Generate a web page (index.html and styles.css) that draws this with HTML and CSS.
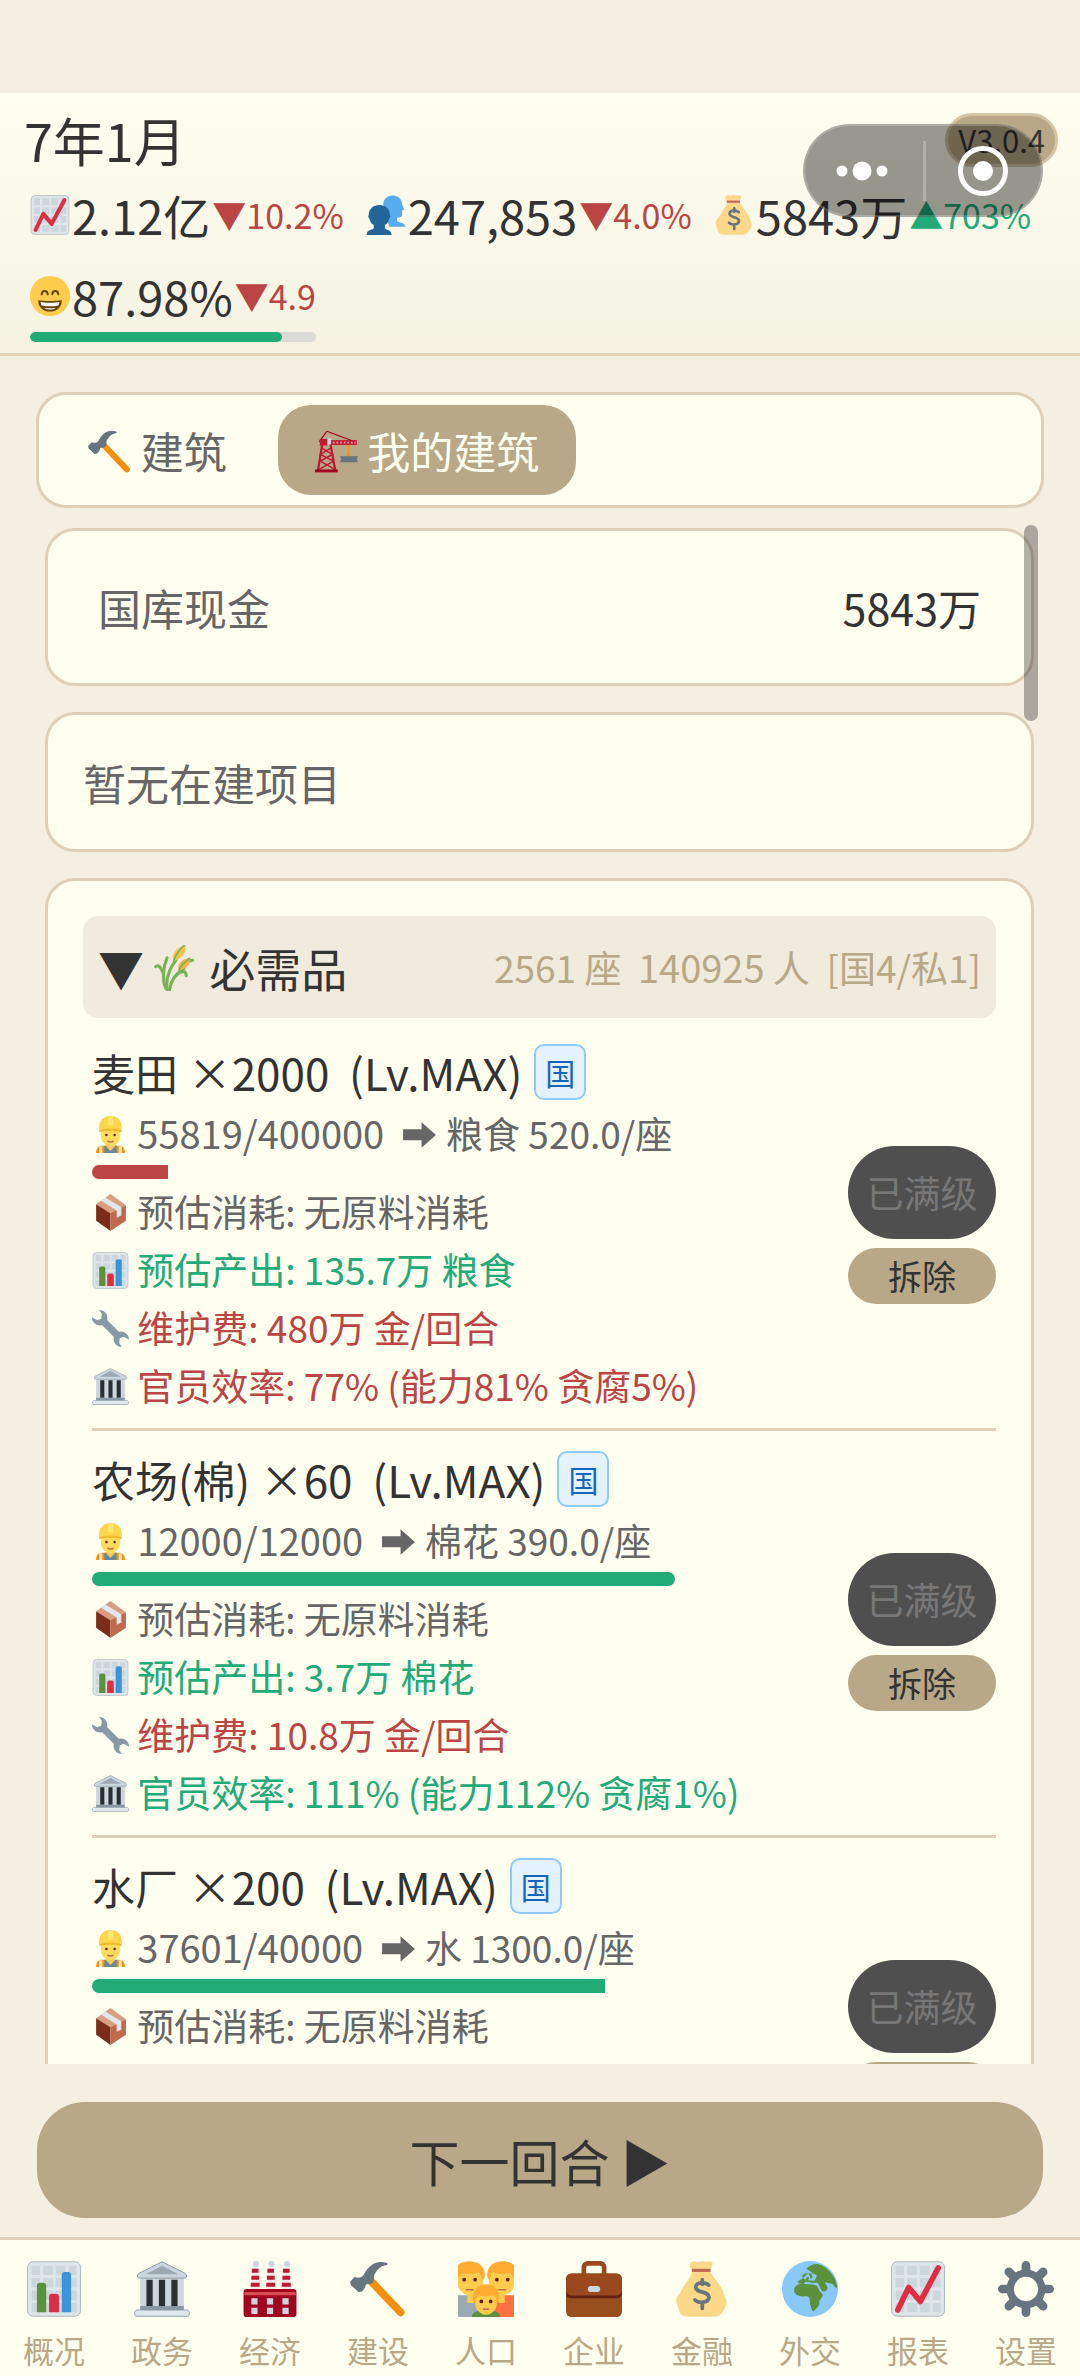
FILE: index.html
```html
<!DOCTYPE html>
<html lang="zh-CN">
<head>
    <meta charset="UTF-8">
    <meta name="viewport" content="width=device-width, initial-scale=1.0">
    <title>我的建筑</title>
    <link rel="stylesheet" href="styles.css">
</head>
<body>
    <!-- 图标 -->
    <svg class="sprite" aria-hidden="true">
        <symbol id="i-grid" viewBox="0 0 36 36">
            <rect x="1" y="0.5" width="34" height="35" rx="3.5" fill="#dfe6ea" stroke="#a9b3ba" stroke-width="0.6"/>
            <g fill="#ccd6dd">
                <path d="M3.5 3h5.500v6H3.500zM11 3h6.500v6H11zM19 3h6.500v6H19zM27.500 3H32.500v6H27.500z"/>
                <path d="M3.500 11h5.500v6H3.500zM11 11h6.500v6H11zM19 11h6.500v6H19zM27.500 11H32.500v6H27.500z"/>
                <path d="M3.500 19h5.500v6H3.500zM11 19h6.500v6H11zM19 19h6.500v6H19zM27.500 19H32.500v6H27.500z"/>
                <path d="M3.500 27h5.500v6H3.500zM11 27h6.500v6H11zM19 27h6.500v6H19zM27.500 27H32.500v6H27.500z"/>
            </g>
        </symbol>
        <symbol id="i-trend" viewBox="0 0 36 36">
            <use href="#i-grid"/>
            <path d="M5 31.500L12 17l7.500 9L31 4.500" fill="none" stroke="#dd2e44" stroke-width="3.600" stroke-linecap="round" stroke-linejoin="round"/>
        </symbol>
        <symbol id="i-bars" viewBox="0 0 36 36">
            <use href="#i-grid"/>
            <path d="M7 33V16a2 2 0 0 1 2-2h2a2 2 0 0 1 2 2v17z" fill="#5c913b"/>
            <path d="M14.800 33V23a2 2 0 0 1 2-2h2.400a2 2 0 0 1 2 2v10z" fill="#dd2e44"/>
            <path d="M23 33V9a2 2 0 0 1 2-2h2a2 2 0 0 1 2 2v24z" fill="#3b94d9"/>
        </symbol>
        <symbol id="i-users" viewBox="0 0 36 36">
            <path d="M15.500 9C15.500 4 19 0.500 24 0.500s8.500 3.500 8.500 8l2 4.500-2 1v4c0 2-2 2-4.500 2.500v2.500c0 2 7 1.500 7.500 5.500H21z" fill="#55acee"/>
            <path d="M2.500 18C2.500 12.500 6.500 9 12 9s9.500 3.500 9.500 9c.8.500.500 2.500-.5 3-.5 3-2 5-4 6v3c1 2 6 1 6 6H.500c0-5 5-4 6.500-6v-3c-2-1-3.500-3-4-6-1-.5-1.300-2.500-.5-3z" fill="#226699"/>
        </symbol>
        <symbol id="i-money" viewBox="0 0 36 36">
            <path d="M12 6C10 5 9.500 1.500 11.500.5c1.500-.7 3 .3 4 .2S17-.2 18.500.2s2 .6 3.500.2 3.500 0 2.500 2.600L22.500 6z" fill="#fdd888"/>
            <path d="M12 6.500h11C26 12 30 15 32 21c.8 2 2.500 5 1.500 7.500S31.500 33 29 35c-2 1-4 1-6 .8H11c-4 .4-7-.8-7.800-3.800C3 29.500 1 27.500 1.500 24.500 1.800 22 3.500 22 4.500 19.500 6.500 15 10 12 12 6.500z" fill="#fdd888"/>
            <path d="M11.500 5h12v2h-12z" fill="#bf6952"/>
            <path d="M22.300 15.500c-1.500-1.800-7.800-2.500-8.300 1-.4 4.500 8.800 2.500 8.500 7-.4 4-7.500 3.500-9 1.500M18.200 12v3M18.200 27v3.500" fill="none" stroke="#67757f" stroke-width="2.400" stroke-linecap="round"/>
        </symbol>
        <symbol id="i-grin" viewBox="0 0 36 36">
            <circle cx="18" cy="18" r="18" fill="#ffcc4d"/>
            <path d="M10.500 16.500c.5-4 5-4 5.500 0M20 16.500c.5-4 5-4 5.500 0" fill="none" stroke="#664500" stroke-width="1.800" stroke-linecap="round"/>
            <path d="M7.500 21.500c3 1.200 18 1.200 21 0 .5 6-4 10.500-10.500 10.500S7 27.500 7.500 21.500z" fill="#664500"/>
            <path d="M9.500 23.500c4 .8 13 .8 17 0-.2 1.500-.6 2.300-1 3-4 1-11 1-15 0-.5-.8-.8-1.500-1-3zM12.500 28.500c3 .7 8 .7 11 0-2.500 2.300-8.500 2.300-11 0z" fill="#fff"/>
        </symbol>
        <symbol id="i-hammer" viewBox="0 0 36 36">
            <path d="M14.500 14L32.500 33" stroke="#f4900c" stroke-width="5" stroke-linecap="round"/>
            <path d="M23.500 1.200C16-1 11.500 4 9 8.500c-1.200 2.300-3 2.300-4.500 2.200L3 10.200 0 13.500l.5 2L5.500 20l2-.3 1.800-2c1-1 .2-2.500 1.500-2.800 1.500-.3 2.700.4 4-1.200 1.500-2-.2-3.500 1.500-6C18 5 20 3 23.300 2.700c1-.2 1-1.200.2-1.500z" fill="#66757f"/>
        </symbol>
        <symbol id="i-crane" viewBox="0 0 36 36">
            <path d="M10 1L3.500 10M10 1l24 9" fill="none" stroke="#a0041e" stroke-width="1"/>
            <path d="M12.500 8.500H35V12.500H12.500z" fill="#be1931"/>
            <path d="M15 10.500h19" stroke="#e9a0a8" stroke-width="1.500" stroke-dasharray="1.500 1.500"/>
            <path d="M4 7.500h6.500V13H4z" fill="#be1931"/>
            <path d="M10.500 7h3v5.500h-3z" fill="#ccd6dd"/>
            <path d="M6 12L2.500 34M13 12l4 22" fill="none" stroke="#be1931" stroke-width="1.900"/>
            <path d="M5.500 15l9 5.500-10 5.500 12 7M13.500 15l-9 5.500 11 5.500-12 7" fill="none" stroke="#be1931" stroke-width="1.200"/>
            <path d="M0 33h19v2.500H0z" fill="#a0041e"/>
            <path d="M28 12.500v7l-1.500 2.500h3L28 19.500" fill="none" stroke="#f4900c" stroke-width="1"/>
            <path d="M21 22h15l-1 2.500 1 2.500H21l1-2.500z" fill="#66757f"/>
        </symbol>
        <symbol id="i-wheat" viewBox="0 0 36 36">
            <g fill="none" stroke="#77b255" stroke-width="2.400" stroke-linecap="round">
                <path d="M11 35C10 26 13 18 18 12"/><path d="M10 34C7 27 8 17 11 10"/><path d="M13 35C14 28 18 22 24 19"/><path d="M8 22C6 17 4 15 2 17"/><path d="M18 24c4-4 8-4 8 0"/><path d="M24 18c2-4 4-6 7-6"/>
            </g>
            <path d="M16 13C14 8 18 2 25 0c2 4-1 10-9 13z" fill="#f4c24d"/>
            <path d="M20 20c-1-5 2-9 9-10 1 4-2 8-9 10z" fill="#f4b43d"/>
            <path d="M16 13C18 7 21 3 25 0M20 20c2-4 5-7 9-10" fill="none" stroke="#77b255" stroke-width="1.200"/>
        </symbol>
        <symbol id="i-worker" viewBox="0 0 36 36">
            <path d="M4 36c0-5 2-7 6-7h16c4 0 6 2 6 7z" fill="#f4900c"/>
            <path d="M12 29h12v7H12z" fill="#66899f"/>
            <path d="M7 29.500h3V36H7zM26 29.500h3V36h-3z" fill="#ffe8b6"/>
            <path d="M14 25h8v5l-4 4-4-4z" fill="#f9ca55"/>
            <path d="M8.500 12h19v7c0 6-4.500 10-9.500 10s-9.500-4-9.500-10z" fill="#ffdc5d"/>
            <path d="M7 14C6 6 10 0 18 0s12 6 11 14c-6-2-16-2-22 0z" fill="#ffd54d"/>
            <path d="M7 14c6-2.500 16-2.500 22 0v1.500c-6-1.500-16-1.500-22 0z" fill="#f0b92e"/>
            <path d="M15.500.5h5V9h-5z" fill="#ffe670"/>
            <circle cx="14" cy="18.500" r="1.200" fill="#662113"/><circle cx="22" cy="18.500" r="1.200" fill="#662113"/>
            <path d="M15 24.500c2 1 4 1 6 0" fill="none" stroke="#c1694f" stroke-width="1.400"/>
        </symbol>
        <symbol id="i-arrow" viewBox="0 0 36 36">
            <path d="M2 13h18V6l14 12.500L20 31v-7.500H2z" fill="currentColor"/>
        </symbol>
        <symbol id="i-box" viewBox="0 0 36 36">
            <path d="M18 0L33 11 18 20 4 10z" fill="#d99e82"/>
            <path d="M4 10l14 9v17L4 26z" fill="#7b2d1c"/>
            <path d="M33 11L18 19v17l15-10z" fill="#c1694f"/>
            <path d="M9 6.500l4-3L28.500 13v8L24 23v-7z" fill="#e1e8ed"/>
        </symbol>
        <symbol id="i-wrench" viewBox="0 0 36 36">
            <path d="M9 9l18 18" stroke="#8899a6" stroke-width="7"/>
            <path d="M7 0c5 0 8 4 8 8s-3 7-7 7-8-3-8-8l5 3 4-1.500L9.500 4z" fill="#8899a6"/>
            <path d="M29 36c-5 0-8-4-8-8s3-7 7-7 8 3 8 8l-5-3-4 1.500L26.500 32z" fill="#8899a6"/>
        </symbol>
        <symbol id="i-bank" viewBox="0 0 36 36">
            <path d="M4 11h28v20H4z" fill="#ccd6dd"/>
            <path d="M8 12h4v17H8zM16 12h4v17h-4zM24 12h4v17h-4z" fill="#292f33"/>
            <path d="M18 .5L33 8c1 .6 1 3 0 3H3c-1 0-1-2.400 0-3z" fill="#ccd6dd" stroke="#8899a6" stroke-width=".6"/>
            <path d="M18 3l10.500 5.500h-21z" fill="#9aaab4"/>
            <path d="M4 29h28v3H4z" fill="#8899a6"/>
            <path d="M2 31.500h32c2 0 2 4 .5 4h-33c-1.500 0-1.500-4 .5-4z" fill="#e1e8ed" stroke="#8899a6" stroke-width=".6"/>
        </symbol>
        <symbol id="i-factory" viewBox="0 0 36 36">
            <g fill="#ccd6dd"><circle cx="9" cy="2" r="2"/><circle cx="19" cy="2" r="2"/><circle cx="29" cy="2" r="2"/></g>
            <path d="M6.500 4.500h4L12 20H5.500zM16.500 4.500h4L22 20h-6.500zM26.500 4.500h4L32 20h-6.500z" fill="#fbe5e8"/>
            <g fill="#be1931">
                <path d="M6.400 5h4.200v2.500H6.200zM6 9.500h5v2.500H6zM5.700 14h5.600v2.500H5.500z"/>
                <path d="M16.400 5h4.200v2.500h-4.400zM16 9.500h5v2.500h-5zM15.700 14h5.600v2.500h-5.800z"/>
                <path d="M26.400 5h4.200v2.500h-4.400zM26 9.500h5v2.500h-5zM25.700 14h5.600v2.500h-5.800z"/>
            </g>
            <rect x="1" y="18" width="34" height="18" rx="2" fill="#a0041e"/>
            <path d="M1.500 20h33v2h-33z" fill="#dd4c55"/>
            <path d="M6 24h4v4H6zM16 24h4v4h-4zM26 24h4v4h-4zM6 30h4v4H6zM16 30h4v4h-4zM26 30h4v4h-4z" fill="#ccd6dd"/>
        </symbol>
        <symbol id="i-family" viewBox="0 0 36 36">
            <path d="M0 22h16v14H0z" fill="#9aaab4"/><path d="M20 22h16v14H20z" fill="#ff7043"/>
            <path d="M6 18h4v9H6zM26 18h4v9h-4z" fill="#ffcc4d"/>
            <path d="M0 8c2-5 14-6 16 0v6c0 4-3 8-8 8-4 0-8-3-8-7zM20 8c2-6 14-5 16 0v7c0 4-4 7-8 7-5 0-8-4-8-8z" fill="#ffcc4d"/>
            <path d="M0 2.500C4-1 16-1.500 17.200 8c.2 2-.5 4-1.500 4.500-.7-2-1.700-4.500-2.200-5.500C9 9 5 8 2.500 8L0 11zM36 2.500C32-1 20-1.500 18.800 8c-.2 2 .5 4 1.500 4.500.7-2.500.7-4.500 1.700-5.500 5 2 8 1.500 11.500.5L36 11z" fill="#ffac33"/>
            <circle cx="4" cy="12" r="1.200" fill="#662113"/><circle cx="11" cy="12" r="1.200" fill="#662113"/>
            <circle cx="25" cy="12" r="1.200" fill="#662113"/><circle cx="32" cy="12" r="1.200" fill="#662113"/>
            <path d="M5 18.500h5M26 18.500h5" stroke="#c1694f" stroke-width="1"/>
            <path d="M9 36c0-3 3-4 6-4h6c3 0 6 1 6 4z" fill="#5c913b"/>
            <path d="M11 21h14v6c0 4-3 7.500-7 7.500S11 31 11 27z" fill="#ffcc4d"/>
            <path d="M9.500 24c0-6 4-9 8.500-9s8.500 3 8.500 9c0 1.500-.5 2.500-1.500 3-.5-2-1-4-2-5-4 1-8 1-10 0-1 1-1.500 3-2 5-1-.5-1.500-1.500-1.500-3z" fill="#ffac33"/>
            <circle cx="15" cy="26" r="1.200" fill="#662113"/><circle cx="21" cy="26" r="1.200" fill="#662113"/>
            <path d="M16 31h4" stroke="#c1694f" stroke-width="1"/>
        </symbol>
        <symbol id="i-case" viewBox="0 0 36 36">
            <path d="M11.500 9V4a2.500 2.500 0 0 1 2.500-2.500h8A2.500 2.500 0 0 1 24.500 4v5" fill="none" stroke="#99491d" stroke-width="3"/>
            <rect y="8" width="36" height="28" rx="3.500" fill="#974f1e"/>
            <path d="M0 19v2c0 2 2 3 4 3h28c2 0 4-1 4-3v-2z" fill="#662113"/>
            <path d="M3.500 8h29A3.500 3.500 0 0 1 36 11.500V19c0 2-2 3.200-4 3.200H4c-2 0-4-1.200-4-3.200v-7.500A3.500 3.500 0 0 1 3.500 8z" fill="#99491d"/>
            <rect x="14" y="16" width="8" height="4" rx="2" fill="#ccd6dd"/>
        </symbol>
        <symbol id="i-globe" viewBox="0 0 36 36">
            <circle cx="18" cy="18" r="18" fill="#88c9f9"/>
            <path d="M15.500 5c2-2 5-3.500 7.500-3C29 3.500 35 10 35.500 17c-1.500 1-2-2-4-2.500-2-.6-3-.5-4-1l1.500 3c1 1.500-1 3.500-3 3-1.500-1.500-2-4-3-5.500h-2c-2 .5-4-1-6-.5l-1.500 1.500c-1-.5-3 0-3.200-1.500.5-1.500 2.500-1.200 3-2.500-.8-1.200.2-2.500 1.500-3 1.500-.5 3.500 1 5-.2L18 6.500z" fill="#5c913b"/>
            <path d="M16 8.500c2-1 5-.5 6.500 1l-1.500 3c-2 .5-3.500-.5-5.500 0l-2-1.500z" fill="#88c9f9"/>
            <path d="M18 8l1 3M15.500 12.500l1.500-2" stroke="#5c913b" stroke-width="1.500"/>
            <path d="M9 16c2-1.500 5-1.500 7-1 2.500 0 5 0 6.500 1 1 1.500 1.500 4 3.500 5 .8 2.500-2 3.500-2 5.500.5 2-2 4-3.200 5.500-1.300.5-1.800-1-2-2-1-2-1-4-1-6-1-1.500-2-1.500-4-1.200-3 .2-5.500-1.300-6-3 0-1.800.2-3 1.200-3.800z" fill="#5c913b"/>
        </symbol>
        <symbol id="i-gear" viewBox="0 0 36 36">
            <path d="M18 2.800v30.400M2.800 18h30.400M7 7l22 22M29 7L7 29" stroke="#66757f" stroke-width="5.600" stroke-linecap="round"/>
            <circle cx="18" cy="18" r="12.500" fill="#66757f"/>
            <circle cx="18" cy="18" r="7.800" fill="#fffff0"/>
        </symbol>
    </svg>

    <header class="top-bar">
        <h1 class="date">7年1月</h1>
        <div class="stats">
            <div class="stat">
                <div class="stat-line"><svg class="stat-icon"><use href="#i-trend"/></svg><span class="stat-value">2.12亿</span><span class="change down">▼10.2%</span></div>
            </div>
            <div class="stat">
                <div class="stat-line"><svg class="stat-icon"><use href="#i-users"/></svg><span class="stat-value">247,853</span><span class="change down">▼4.0%</span></div>
            </div>
            <div class="stat">
                <div class="stat-line"><svg class="stat-icon"><use href="#i-money"/></svg><span class="stat-value">5843万</span><span class="change up">▲703%</span></div>
            </div>
            <div class="stat">
                <div class="stat-line"><svg class="stat-icon"><use href="#i-grin"/></svg><span class="stat-value">87.98%</span><span class="change down">▼4.9</span></div>
                <div class="mood-bar"><div class="mood-fill" style="width: 88%"></div></div>
            </div>
        </div>
        <span class="version">V3.0.4</span>
        <div class="capsule">
            <button class="capsule-btn" type="button" aria-label="更多">
                <svg class="capsule-icon" viewBox="0 0 60 60"><circle cx="10" cy="30" r="5.500"/><circle cx="30" cy="30" r="9.500"/><circle cx="50" cy="30" r="5.500"/></svg>
            </button>
            <button class="capsule-btn" type="button" aria-label="关闭">
                <svg class="capsule-icon" viewBox="0 0 60 60"><circle cx="30" cy="30" r="22.500" fill="none" stroke="#fff" stroke-width="5"/><circle cx="30" cy="30" r="10"/></svg>
            </button>
        </div>
    </header>

    <main class="content">
        <div class="tabs">
            <button class="tab" type="button"><svg class="icon"><use href="#i-hammer"/></svg> 建筑</button>
            <button class="tab active" type="button"><svg class="icon"><use href="#i-crane"/></svg> 我的建筑</button>
        </div>

        <div class="scroll-area">
            <div class="card">
                <div class="cash-row"><span>国库现金</span><span class="cash-value">5843万</span></div>
            </div>

            <div class="card">
                <div class="empty">暂无在建项目</div>
            </div>

            <div class="card">
                <div class="group-header">
                    <span class="group-arrow">▼</span>
                    <h2 class="group-name"><svg class="icon"><use href="#i-wheat"/></svg> 必需品</h2>
                    <span class="group-info">2561 座&nbsp; <span class="num">140925</span> 人&nbsp; [国4/私1]</span>
                </div>

                <div class="building-list">
                    <div class="building">
                        <div class="building-info">
                            <div class="building-name"><span>麦田 <span class="level">×2000&nbsp; (Lv.MAX)</span></span><span class="badge">国</span></div>
                            <div class="line"><svg class="icon"><use href="#i-worker"/></svg> <span class="num">55819/400000</span>&nbsp; <svg class="icon"><use href="#i-arrow"/></svg> 粮食 520.0/座</div>
                            <div class="bar"><div class="bar-fill low" style="width: 13.95%"></div></div>
                            <div class="line"><svg class="icon"><use href="#i-box"/></svg> 预估消耗: 无原料消耗</div>
                            <div class="line good"><svg class="icon"><use href="#i-bars"/></svg> 预估产出: 135.7万 粮食</div>
                            <div class="line bad"><svg class="icon"><use href="#i-wrench"/></svg> 维护费: 480万 金/回合</div>
                            <div class="line bad"><svg class="icon"><use href="#i-bank"/></svg> 官员效率: 77% (能力81% 贪腐5%)</div>
                        </div>
                        <div class="actions">
                            <button class="btn-upgrade" type="button" disabled>已满级</button>
                            <button class="btn-remove" type="button">拆除</button>
                        </div>
                    </div>

                    <div class="building">
                        <div class="building-info">
                            <div class="building-name"><span>农场(棉) <span class="level">×60&nbsp; (Lv.MAX)</span></span><span class="badge">国</span></div>
                            <div class="line"><svg class="icon"><use href="#i-worker"/></svg> <span class="num">12000/12000</span>&nbsp; <svg class="icon"><use href="#i-arrow"/></svg> 棉花 390.0/座</div>
                            <div class="bar"><div class="bar-fill" style="width: 100%"></div></div>
                            <div class="line"><svg class="icon"><use href="#i-box"/></svg> 预估消耗: 无原料消耗</div>
                            <div class="line good"><svg class="icon"><use href="#i-bars"/></svg> 预估产出: 3.7万 棉花</div>
                            <div class="line bad"><svg class="icon"><use href="#i-wrench"/></svg> 维护费: 10.8万 金/回合</div>
                            <div class="line good"><svg class="icon"><use href="#i-bank"/></svg> 官员效率: 111% (能力112% 贪腐1%)</div>
                        </div>
                        <div class="actions">
                            <button class="btn-upgrade" type="button" disabled>已满级</button>
                            <button class="btn-remove" type="button">拆除</button>
                        </div>
                    </div>

                    <div class="building">
                        <div class="building-info">
                            <div class="building-name"><span>水厂 <span class="level">×200&nbsp; (Lv.MAX)</span></span><span class="badge">国</span></div>
                            <div class="line"><svg class="icon"><use href="#i-worker"/></svg> <span class="num">37601/40000</span>&nbsp; <svg class="icon"><use href="#i-arrow"/></svg> 水 1300.0/座</div>
                            <div class="bar"><div class="bar-fill" style="width: 94%"></div></div>
                            <div class="line"><svg class="icon"><use href="#i-box"/></svg> 预估消耗: 无原料消耗</div>
                            <div class="line good"><svg class="icon"><use href="#i-bars"/></svg> 预估产出: 24.4万 水</div>
                            <div class="line bad"><svg class="icon"><use href="#i-wrench"/></svg> 维护费: 48万 金/回合</div>
                            <div class="line bad"><svg class="icon"><use href="#i-bank"/></svg> 官员效率: 94% (能力95% 贪腐1%)</div>
                        </div>
                        <div class="actions">
                            <button class="btn-upgrade" type="button" disabled>已满级</button>
                            <button class="btn-remove" type="button">拆除</button>
                        </div>
                    </div>
                </div>
            </div>

            <div class="scroll-thumb"></div>
        </div>
    </main>

    <button class="next-turn" type="button">下一回合 ▶</button>

    <nav class="bottom-nav">
        <a class="nav-item" href="#"><svg class="nav-icon"><use href="#i-bars"/></svg>概况</a>
        <a class="nav-item" href="#"><svg class="nav-icon"><use href="#i-bank"/></svg>政务</a>
        <a class="nav-item" href="#"><svg class="nav-icon"><use href="#i-factory"/></svg>经济</a>
        <a class="nav-item" href="#"><svg class="nav-icon"><use href="#i-hammer"/></svg>建设</a>
        <a class="nav-item" href="#"><svg class="nav-icon"><use href="#i-family"/></svg>人口</a>
        <a class="nav-item" href="#"><svg class="nav-icon"><use href="#i-case"/></svg>企业</a>
        <a class="nav-item" href="#"><svg class="nav-icon"><use href="#i-money"/></svg>金融</a>
        <a class="nav-item" href="#"><svg class="nav-icon"><use href="#i-globe"/></svg>外交</a>
        <a class="nav-item" href="#"><svg class="nav-icon"><use href="#i-trend"/></svg>报表</a>
        <a class="nav-item" href="#"><svg class="nav-icon"><use href="#i-gear"/></svg>设置</a>
    </nav>
</body>
</html>
```

FILE: styles.css
```css
* {
    margin: 0;
    padding: 0;
    box-sizing: border-box;
}

body {
    font-family: 'Noto Sans CJK SC', sans-serif;
    font-size: 37px;
    color: #333333;
    background: #f5efe2;
    display: flex;
    flex-direction: column;
    height: 100vh;
    padding-top: 93px;
    overflow: hidden;
}

button {
    font-family: inherit;
    color: inherit;
    border: none;
    cursor: pointer;
}

.sprite {
    display: none;
}

.icon {
    width: 1em;
    height: 1em;
    vertical-align: -4px;
}

/* 顶部状态栏 */
.top-bar {
    position: relative;
    flex-shrink: 0;
    padding: 9px 24px 11px;
    background: linear-gradient(#fffff0, #f5f2e2);
    border-bottom: 3px solid #dfd2b9;
}

.date {
    font-size: 52px;
    font-weight: 400;
    line-height: 76px;
}

.stats {
    display: flex;
    flex-wrap: wrap;
    gap: 13px 22px;
    padding: 3px 6px 0;
}

.stat-line {
    display: flex;
    align-items: center;
    line-height: 68px;
}

.stat-icon {
    width: 40px;
    height: 40px;
    margin-right: 2px;
}

.stat-value {
    font-size: 47px;
}

.change {
    margin-left: 2px;
    font-size: 34px;
}

.up {
    color: #22aa77;
}

.down {
    color: #bb4444;
}

.mood-bar {
    height: 10px;
    margin-top: 2px;
    border-radius: 5px;
    background: #dadad6;
    overflow: hidden;
}

.mood-fill {
    height: 100%;
    border-radius: 5px;
    background: #22aa77;
}

.version {
    position: absolute;
    top: 20px;
    right: 22px;
    padding: 0 10px;
    border: 3px solid #d5c5a5;
    border-radius: 27px;
    background: #b8a888;
    font-size: 31px;
    line-height: 48px;
}

.capsule {
    position: absolute;
    top: 31px;
    right: 37px;
    width: 240px;
    height: 93px;
    display: flex;
    align-items: center;
    border: 2px solid rgba(255, 255, 255, 0.2);
    border-radius: 47px;
    background: rgba(0, 0, 0, 0.4);
}

.capsule-btn {
    width: 50%;
    height: 60px;
    padding-left: 27px;
    background: none;
    text-align: left;
}

.capsule-btn + .capsule-btn {
    border-left: 3px solid rgba(255, 255, 255, 0.25);
}

.capsule-icon {
    display: block;
    width: 60px;
    height: 60px;
    fill: #ffffff;
}

/* 内容区 */
.content {
    flex: 1;
    min-height: 0;
    display: flex;
    flex-direction: column;
    padding: 36px 36px 0;
}

.tabs {
    display: flex;
    gap: 14px;
    padding: 10px 12px;
    border: 3px solid #decfb8;
    border-radius: 30px;
    background: #fffff0;
}

.tab {
    padding: 14px 37px;
    border-radius: 33px;
    background: none;
    color: #666666;
    font-size: 43px;
    line-height: 62px;
}

.tab.active {
    background: #b8a888;
    color: #fffff0;
}

.scroll-area {
    position: relative;
    flex: 1;
    min-height: 0;
    margin-top: 17px;
    padding: 3px 10px 0 9px;
    overflow: hidden;
}

.scroll-thumb {
    position: absolute;
    top: 0;
    right: 6px;
    width: 14px;
    height: 196px;
    border-radius: 7px;
    background: rgba(0, 0, 0, 0.3);
}

.card {
    margin-bottom: 26px;
    padding: 35px;
    border: 3px solid #decfb8;
    border-radius: 30px;
    background: #fffff0;
}

.cash-row {
    display: flex;
    justify-content: space-between;
    padding: 15px;
    color: #666666;
    font-size: 43px;
    line-height: 52px;
}

.cash-value {
    color: #333333;
}

.empty {
    color: #666666;
    font-size: 43px;
    line-height: 64px;
}

.group-header {
    display: flex;
    align-items: center;
    margin-bottom: 6px;
    padding: 17px 15px;
    border-radius: 15px;
    background: #f0ebdd;
    line-height: 68px;
}

.group-arrow {
    margin-right: 9px;
    font-size: 46px;
}

.group-name {
    font-size: 46px;
    font-weight: 400;
}

.group-info {
    margin-left: auto;
    color: #b8a888;
}

.num {
    font-size: 38px;
    line-height: 1;
}

.building-list {
    padding-left: 9px;
}

.building {
    display: flex;
    align-items: center;
    justify-content: space-between;
    padding: 16px 0 14px;
    border-bottom: 3px solid #decfb8;
}

.building-name {
    display: flex;
    align-items: center;
    font-size: 43px;
    line-height: 64px;
}

.level {
    font-size: 44px;
    line-height: 1;
}

.badge {
    margin-left: 12px;
    padding: 0 9px;
    border: 2px solid #90caf9;
    border-radius: 10px;
    background: #e3f2fd;
    color: #1565c0;
    font-size: 30px;
    line-height: 52px;
}

.line {
    color: #666666;
    line-height: 58px;
    white-space: nowrap;
}

.line.good {
    color: #22aa77;
}

.line.bad {
    color: #bb4444;
}

.bar {
    width: 90%;
    height: 14px;
    margin: 3px 0;
    border-radius: 7px;
    overflow: hidden;
}

.bar-fill {
    height: 100%;
    background: #22aa77;
}

.bar-fill.low {
    background: #bb4444;
}

.actions {
    display: flex;
    flex-direction: column;
    gap: 9px;
    width: 148px;
    padding-bottom: 5px;
}

.btn-upgrade {
    border-radius: 47px;
    background: #4f4f4f;
    color: #777777;
    font-size: 37px;
    line-height: 93px;
}

.btn-remove {
    border-radius: 28px;
    background: #b8a888;
    font-size: 34px;
    line-height: 56px;
}

.next-turn {
    flex-shrink: 0;
    margin: 38px 37px 19px;
    padding: 23px;
    border-radius: 48px;
    background: #b8a888;
    font-size: 50px;
    line-height: 70px;
}

/* 底部导航 */
.bottom-nav {
    flex-shrink: 0;
    display: flex;
    padding: 21px 0 4px;
    border-top: 3px solid #decfb8;
    background: #fffff0;
}

.nav-item {
    flex: 1;
    display: flex;
    flex-direction: column;
    align-items: center;
    gap: 11px;
    color: #b8a888;
    font-size: 31px;
    line-height: 44px;
    text-decoration: none;
}

.nav-icon {
    width: 56px;
    height: 56px;
}
```
